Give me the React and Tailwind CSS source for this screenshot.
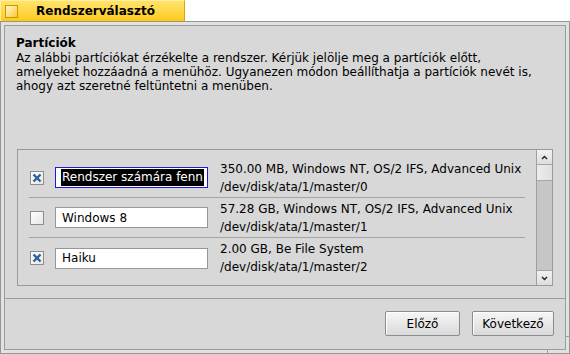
import React from "react";

const partitions = [
  {
    checked: true,
    name: "Rendszer számára fenn",
    focused: true,
    info: "350.00 MB, Windows NT, OS/2 IFS, Advanced Unix",
    path: "/dev/disk/ata/1/master/0",
  },
  {
    checked: false,
    name: "Windows 8",
    info: "57.28 GB, Windows NT, OS/2 IFS, Advanced Unix",
    path: "/dev/disk/ata/1/master/1",
  },
  {
    checked: true,
    name: "Haiku",
    info: "2.00 GB, Be File System",
    path: "/dev/disk/ata/1/master/2",
  },
];

const CheckBox = ({ checked }) => (
  <div className="w-[14px] h-[14px] border border-[#8e8e8e] bg-gradient-to-br from-[#ffffff] to-[#e6e6e6] flex items-center justify-center shrink-0">
    {checked && (
      <svg width="12" height="12" viewBox="0 0 12 12">
        <path d="M2.5 2.5 L9.5 9.5 M9.5 2.5 L2.5 9.5" stroke="#2f5f9c" strokeWidth="2.4" strokeLinecap="butt" />
      </svg>
    )}
  </div>
);

const Row = ({ p, last }) => (
  <div className={`mx-[11px] h-[40px] flex items-center ${last ? "" : "border-b border-[#a3a3a3]"}`}>
    <div className="pl-[1px]">
      <CheckBox checked={p.checked} />
    </div>
    {/* name field, first one has focus + selected text */}
    <div
      className={`ml-[11px] w-[153px] h-[21px] bg-white border flex items-center overflow-hidden whitespace-nowrap shrink-0 ${
        p.focused ? "border-[#1a1ad8] pl-[5px]" : "border-[#979797] pl-[6px]"
      }`}
    >
      {p.focused ? (
        <span className="bg-black text-white h-[17px] leading-[17px] pl-[1px] pr-[1px]">{p.name}</span>
      ) : (
        <span className="text-black">{p.name}</span>
      )}
    </div>
    <div className="ml-[12px] leading-[18px] whitespace-nowrap text-black">
      <div>{p.info}</div>
      <div>{p.path}</div>
    </div>
  </div>
);

const ScrollBar = () => (
  <div className="w-[16px] border-l border-[#a0a0a0] flex flex-col bg-[#c6c6c6]">
    <div className="h-[15px] bg-gradient-to-b from-[#f2f2f2] to-[#dedede] border-b border-[#a6a6a6] flex items-center justify-center">
      <svg width="7" height="5" viewBox="0 0 7 5">
        <path d="M1 4 L3.5 1.5 L6 4" stroke="#202020" strokeWidth="1.4" fill="none" />
      </svg>
    </div>
    <div className="h-[16px] bg-gradient-to-r from-[#ececec] to-[#e0e0e0] border-b border-[#a6a6a6]" />
    <div className="flex-1" />
    <div className="h-[15px] bg-gradient-to-b from-[#f2f2f2] to-[#dedede] border-t border-[#a6a6a6] flex items-center justify-center">
      <svg width="7" height="5" viewBox="0 0 7 5">
        <path d="M1 1 L3.5 3.5 L6 1" stroke="#202020" strokeWidth="1.4" fill="none" />
      </svg>
    </div>
  </div>
);

const Button = ({ children, width }) => (
  <button
    className={`${width} h-[25px] rounded-[2px] border border-[#8c8c8c] bg-gradient-to-b from-[#f6f6f6] to-[#dadada] text-black text-[12px] shadow-[inset_1px_1px_0_#ffffff]`}
  >
    {children}
  </button>
);

export default function App() {
  return (
    <div className="w-[570px] h-[354px] bg-white relative overflow-hidden font-['DejaVu_Sans',sans-serif] text-[12px] text-black">
      {/* window tab */}
      <div className="w-[185px] h-[21px] bg-gradient-to-b from-[#ffe36a] to-[#ffcb00] border-t border-l border-[#ffeea0] border-r-[#d9a900] border-r flex items-center">
        <div className="ml-[4px] w-[13px] h-[13px] border border-[#c49a00] bg-gradient-to-br from-[#fff6c8] to-[#ffc800] shrink-0" />
        <span className="ml-[18px] font-bold leading-[14px]">Rendszerválasztó</span>
      </div>

      {/* window frame */}
      <div className="h-[333px] border border-[#969696] bg-[#e2e2e2] p-[3px]">
        <div className="h-full border border-[#9c9c9c] bg-[#d8d8d8] flex flex-col">
          <div className="pl-[11px] pt-[10px]">
            <div className="font-bold leading-[15px]">Partíciók</div>
            <div className="leading-[14px]">
              Az alábbi partíciókat érzékelte a rendszer. Kérjük jelölje meg a partíciók előtt,
              <br />
              amelyeket hozzáadná a menühöz. Ugyanezen módon beállíthatja a partíciók nevét is,
              <br />
              ahogy azt szeretné feltüntetni a menüben.
            </div>
          </div>

          {/* partition list */}
          <div className="mt-auto mx-[12px] h-[137px] border border-[#9a9a9a] flex">
            <div className="flex-1 pt-[8px]">
              {partitions.map((p, i) => (
                <Row key={p.path} p={p} last={i === partitions.length - 1} />
              ))}
            </div>
            <ScrollBar />
          </div>

          <div className="mt-[12px] h-px bg-[#9c9c9c]" />

          <div className="mt-[12px] mb-[13px] pr-[11px] flex justify-end gap-[12px]">
            <Button width="w-[75px]">Előző</Button>
            <Button width="w-[82px]">Következő</Button>
          </div>
        </div>
      </div>

      {/* resize corner notches */}
      <div className="absolute left-[547px] top-[349px] w-px h-[5px] bg-[#9c9c9c]" />
      <div className="absolute left-[565px] top-[336px] w-[5px] h-px bg-[#9c9c9c]" />
    </div>
  );
}
